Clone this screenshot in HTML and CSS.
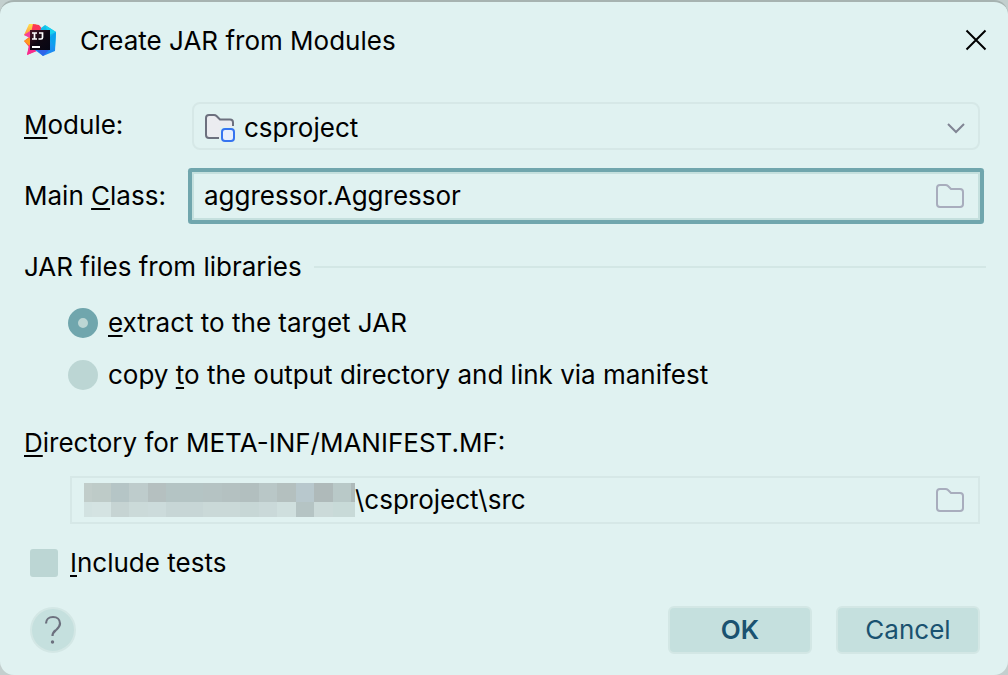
FILE: index.html
```html
<!DOCTYPE html>
<html lang="en">
<head>
<meta charset="utf-8">
<meta name="viewport" content="width=device-width, initial-scale=1">
<title>Create JAR from Modules</title>
<link rel="stylesheet" href="styles.css">
</head>
<body>
<form class="dialog" aria-labelledby="title">
  <header class="titlebar">
    <svg class="logo" width="32" height="32" viewBox="1 1 32 32" aria-hidden="true">
      <defs>
        <linearGradient id="warm" x1="0" y1="0" x2="0" y2="1">
          <stop offset="0" stop-color="#ffe04d"/>
          <stop offset=".3" stop-color="#ffa040"/>
          <stop offset=".5" stop-color="#ff6a2a"/>
          <stop offset="1" stop-color="#ff2d8c"/>
        </linearGradient>
        <linearGradient id="cool" x1="0" y1="0" x2="0" y2="1">
          <stop offset="0" stop-color="#14c3e8"/>
          <stop offset="1" stop-color="#1c82f5"/>
        </linearGradient>
        <linearGradient id="plate" x1="0" y1="0" x2="1" y2="1">
          <stop offset="0" stop-color="#4a1426"/>
          <stop offset=".5" stop-color="#100812"/>
          <stop offset="1" stop-color="#060614"/>
        </linearGradient>
      </defs>
      <path d="M6 1 13 1 18 17 14 28 4 32 6 24 1 18 6 14 1 12Z" fill="url(#warm)"/>
      <path d="M1 12 7 8 7 15Z" fill="#f53d9c"/>
      <path d="M1 18 7 15 7 23Z" fill="#ff9a1f"/>
      <path d="M6 22 16 26 13 28 4 32Z" fill="#f72b8e"/>
      <path d="M10 1 16 2 20 7 20 13 8 10Z" fill="#fb3657"/>
      <path d="M18 5 22 2 33 9 32 28 20 33 12 27 16 14Z" fill="url(#cool)"/>
      <path d="M22 2 33 9 26 12Z" fill="#19d2ef"/>
      <path d="M26 15 33 9 32 24Z" fill="#0ba2ed"/>
      <path d="M13 26 27 26 20 33Z" fill="#2f64e8"/>
      <rect x="7" y="7" width="20" height="20" fill="url(#plate)"/>
      <path d="M9 10h5M11.500 10v6M9 16h5M16 10h3.500v4.500q0 1.500-1.500 1.500h-2.500" fill="none" stroke="#fff" stroke-width="1.700"/>
      <path d="M9 24h8" stroke="#fff" stroke-width="2"/>
    </svg>
    <h1 class="title" id="title">Create JAR from Modules</h1>
    <button class="icon-button close" type="button" aria-label="Close">
      <svg width="22" height="22" viewBox="0 0 22 22"><path d="M1.500 1.500 20.500 20.500M20.500 1.500 1.500 20.500" stroke="#000" stroke-width="2"/></svg>
    </button>
  </header>

  <div class="fields">
    <label class="field-label module-label" for="module"><u>M</u>odule:</label>
    <div class="field combo">
      <svg width="32" height="28" viewBox="0 0 32 28" aria-hidden="true">
        <path d="M16 24H5Q2 24 2 21V4Q2 1 5 1H10Q11.500 1 12.500 2L16 5.500H26Q29 5.500 29 8.500V13H16Z" fill="#ebecf0"/>
        <path d="M15 24H5Q2 24 2 21V4Q2 1 5 1H10Q11.500 1 12.500 2L16 5.500H26Q29 5.500 29 8.500V12" fill="none" stroke="#6c707e" stroke-width="2"/>
        <rect x="18" y="15" width="12" height="12" rx="3" fill="#e7effd" stroke="#3574f0" stroke-width="2"/>
      </svg>
      <select class="entry" id="module"><option>csproject</option></select>
      <svg class="chevron" width="18" height="12" viewBox="0 0 18 12" aria-hidden="true"><path d="M1 2 9 10 17 2" fill="none" stroke="#818594" stroke-width="2"/></svg>
    </div>

    <label class="field-label" for="main-class">Main <u>C</u>lass:</label>
    <div class="field focused">
      <input class="entry" id="main-class" type="text" value="aggressor.Aggressor" spellcheck="false">
      <button class="icon-button" type="button" aria-label="Browse main class">
        <svg width="28" height="24" viewBox="0 0 28 24"><path class="folder" d="M1 4Q1 1 4 1H9.500Q11 1 12 2L15 5H24Q27 5 27 8V20Q27 23 24 23H4Q1 23 1 20Z"/></svg>
      </button>
    </div>
  </div>

  <fieldset class="libraries">
    <legend class="section-title">JAR files from libraries</legend>
    <label class="choice"><input class="radio" type="radio" name="libraries" checked><span><u>e</u>xtract to the target JAR</span></label>
    <label class="choice"><input class="radio" type="radio" name="libraries"><span>copy <u>t</u>o the output directory and link via manifest</span></label>
  </fieldset>

  <label class="directory-label" for="directory"><u>D</u>irectory for META-INF/MANIFEST.MF:</label>
  <div class="field directory">
    <svg class="mosaic" width="271" height="34" viewBox="0 0 271 34" shape-rendering="crispEdges" aria-hidden="true">
      <path fill="#c1cdca" d="M0 0h8v19H0z"/>
      <path fill="#becbc8" d="M8 0h19v19H8z"/>
      <path fill="#b5c5c6" d="M27 0h18v19H27z"/>
      <path fill="#becccc" d="M45 0h19v19H45z"/>
      <path fill="#b5c0c0" d="M64 0h18v19H64z"/>
      <path fill="#b4c4c4" d="M82 0h37v19H82z"/>
      <path fill="#b5c3c3" d="M119 0h19v19h-19z"/>
      <path fill="#b4c1c1" d="M138 0h18v19h-18z"/>
      <path fill="#b2bfbf" d="M156 0h19v19h-19z"/>
      <path fill="#b9c7c7" d="M175 0h18v19h-18z"/>
      <path fill="#b4c0bf" d="M193 0h19v19h-19z"/>
      <path fill="#b8c8cd" d="M212 0h18v19h-18z"/>
      <path fill="#afbaba" d="M230 0h19v19h-19z"/>
      <path fill="#b9c9c8" d="M249 0h18v19h-18z"/>
      <path fill="#aebaba" d="M267 0h4v19h-4z"/>
      <path fill="#d2e2e1" d="M0 19h8v15H0z"/>
      <path fill="#d4e3e2" d="M8 19h19v15H8z"/>
      <path fill="#c6d4d3" d="M27 19h18v15H27z"/>
      <path fill="#cbdad9" d="M45 19h19v15H45z"/>
      <path fill="#ccdbdb" d="M64 19h18v15H64z"/>
      <path fill="#c7d6d6" d="M82 19h37v15H82z"/>
      <path fill="#cad9d8" d="M119 19h37v15h-37z"/>
      <path fill="#c7d7d6" d="M156 19h19v15h-19z"/>
      <path fill="#cad9d9" d="M175 19h18v15h-18z"/>
      <path fill="#cfdfde" d="M193 19h19v15h-19z"/>
      <path fill="#b5c4c4" d="M212 19h18v15h-18z"/>
      <path fill="#cbdad9" d="M230 19h19v15h-19z"/>
      <path fill="#c8dad8" d="M249 19h22v15h-22z"/>
    </svg>
    <input class="entry" id="directory" type="text" value="\csproject\src" spellcheck="false">
    <button class="icon-button" type="button" aria-label="Browse directory">
      <svg width="28" height="24" viewBox="0 0 28 24"><path class="folder" d="M1 4Q1 1 4 1H9.500Q11 1 12 2L15 5H24Q27 5 27 8V20Q27 23 24 23H4Q1 23 1 20Z"/></svg>
    </button>
  </div>

  <label class="choice tests"><input class="checkbox" type="checkbox"><span><u>I</u>nclude tests</span></label>

  <footer class="actions">
    <button class="help" type="button" aria-label="Help">
      <svg width="18" height="30" viewBox="0 0 18 30"><path d="M2 8.500C2 4.500 5 2 9 2S16 4.500 16 8.500C16 12 13.500 13.500 11.500 15.500 9.500 17 8.500 18 8.500 21" fill="none" stroke="#6c707e" stroke-width="2.200"/><circle cx="8.500" cy="27" r="1.700" fill="#6c707e"/></svg>
    </button>
    <button class="button primary" type="submit">OK</button>
    <button class="button" type="button">Cancel</button>
  </footer>
</form>
</body>
</html>
```
FILE: styles.css
```css
* {
  box-sizing: border-box;
}

body {
  margin: 0;
  background: #c3cfce;
  color: #000;
  font: 26px/32px Inter, "Liberation Sans", sans-serif;
}

u {
  text-decoration-thickness: 2px;
  text-underline-offset: 3px;
  text-decoration-skip-ink: none;
}

button,
input,
select {
  margin: 0;
  color: inherit;
  font: inherit;
}

.dialog {
  min-height: 100vh;
  padding: 16px 28px 20px 24px;
  border-top: 2px solid #a7b3b1;
  border-radius: 14px;
  background: #e0f2f1;
}

.titlebar {
  display: flex;
  align-items: center;
  height: 44px;
  margin-right: -7px;
}

.logo {
  margin-right: 24px;
}

.title {
  margin: 0;
  padding-top: 2px;
  font-size: 26px;
  font-weight: 400;
}

.icon-button {
  display: flex;
  padding: 0;
  border: 0;
  background: none;
}

.close {
  margin-left: auto;
}

.fields {
  display: grid;
  grid-template-columns: 168px 1fr;
  align-items: center;
  row-gap: 22px;
  margin-top: 40px;
}

.module-label {
  padding-bottom: 2px;
}

.field {
  display: flex;
  align-items: center;
  height: 48px;
  padding: 0 14px 0 10px;
  border: 2px solid #d6e8e7;
}

.combo {
  gap: 8px;
  padding: 3px 13px 0 10px;
  border-radius: 8px;
}

.focused {
  border-color: #c5e0de;
  box-shadow: 0 0 0 4px #70a6ad;
  border-radius: 1px;
}

.entry {
  flex: 1;
  min-width: 0;
  height: 32px;
  padding: 0;
  border: 0;
  outline: 0;
  background: none;
  appearance: none;
}

.folder {
  fill: none;
  stroke: #a8adbd;
  stroke-width: 2px;
}

.libraries {
  margin: 31px -6px 0 0;
  padding: 0;
  border: 0;
}

.section-title {
  display: flex;
  align-items: center;
  gap: 12px;
  width: 100%;
  padding: 0;
}

.section-title::after {
  flex: 1;
  height: 2px;
  background: #d3e7e5;
  content: "";
}

.choice {
  display: flex;
  align-items: center;
  gap: 10px;
  margin: 20px 0 0 44px;
}

.section-title + .choice {
  margin-top: 24px;
}

.radio {
  width: 30px;
  height: 30px;
  border-radius: 50%;
  background: #bcd6d4;
  appearance: none;
}

.radio:checked {
  border: 10px solid #70a6ad;
}

.directory-label {
  display: block;
  margin-top: 36px;
}

.directory {
  margin: 17px 0 0 46px;
  padding-left: 12px;
}

.choice.tests {
  gap: 12px;
  margin: 23px 0 0 6px;
}

.checkbox {
  width: 28px;
  height: 28px;
  border-radius: 3px;
  background: #bcd6d4;
  appearance: none;
}

.actions {
  display: flex;
  align-items: center;
  gap: 24px;
  margin-top: 27px;
  padding-left: 6px;
}

.help {
  display: grid;
  place-items: center;
  width: 46px;
  height: 46px;
  margin-right: auto;
  padding: 0;
  border: 2px solid #d3e7e5;
  border-radius: 50%;
  background: #c5e0de;
}

.button {
  width: 144px;
  height: 48px;
  padding: 0;
  border: 2px solid #d3e7e5;
  border-radius: 6px;
  background: #c5e0de;
  color: #1a5270;
}

.primary {
  font-weight: 600;
}
```
